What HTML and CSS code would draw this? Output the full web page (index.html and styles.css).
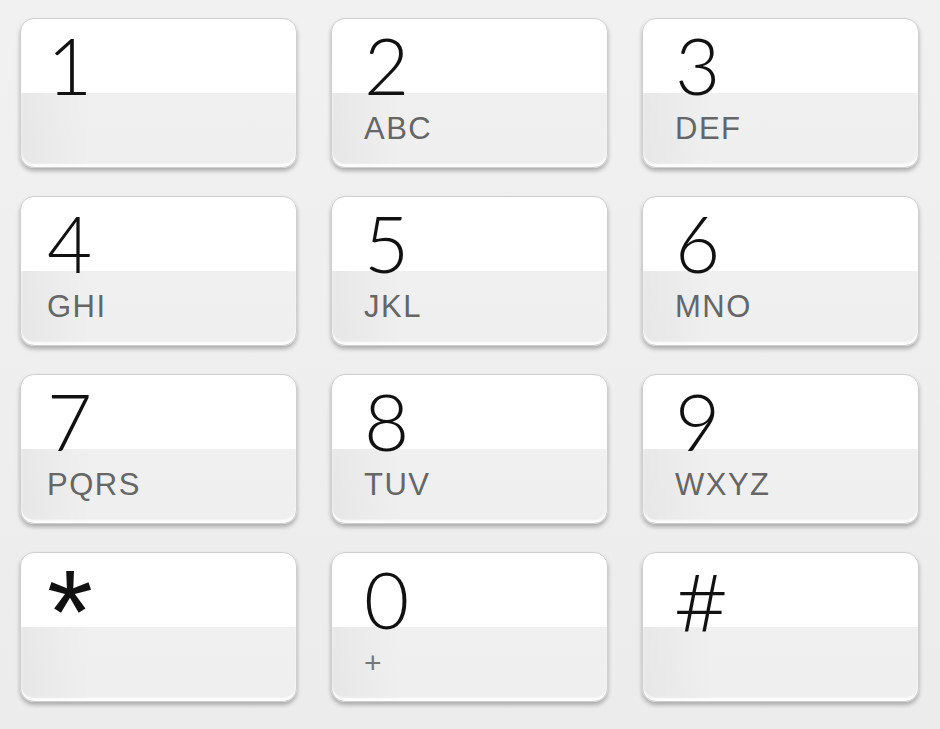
FILE: index.html
```html
<!DOCTYPE html>
<html lang="en">
<head>
  <meta charset="UTF-8" />
  <title>Dialpad</title>
  <link rel="stylesheet" href="styles.css">
</head>
<body>
  <div class="dialpad">
    <div class="key"><span class="digit">1</span></div>
    <div class="key"><span class="digit">2</span><span class="letters">ABC</span></div>
    <div class="key"><span class="digit">3</span><span class="letters">DEF</span></div>

    <div class="key"><span class="digit">4</span><span class="letters">GHI</span></div>
    <div class="key"><span class="digit">5</span><span class="letters">JKL</span></div>
    <div class="key"><span class="digit">6</span><span class="letters">MNO</span></div>

    <div class="key"><span class="digit">7</span><span class="letters">PQRS</span></div>
    <div class="key"><span class="digit">8</span><span class="letters">TUV</span></div>
    <div class="key"><span class="digit">9</span><span class="letters">WXYZ</span></div>

    <div class="key"><span class="digit star">*</span></div>
    <div class="key"><span class="digit">0</span><span class="letters plus">+</span></div>
    <div class="key"><span class="digit hash">#</span></div>
  </div>
</body>
</html>
```

FILE: styles.css
```css
* {
  margin: 0;
  padding: 0;
  box-sizing: border-box;
}
body {
  width: 940px;
  height: 729px;
  background: linear-gradient(#f1f1f1, #ececec);
  font-family: 'Lato', 'Open Sans', sans-serif;
  overflow: hidden;
}
.dialpad {
  display: grid;
  grid-template-columns: repeat(3, 277px);
  grid-auto-rows: 150px;
  column-gap: 34px;
  row-gap: 28px;
  padding: 18px 0 0 20px;
}
.key {
  display: flex;
  flex-direction: column;
  align-items: flex-start;
  padding: 15px 0 0 32px;
  border: 1px solid #cfcfcf;
  border-radius: 14px;
  background:
    linear-gradient(90deg, rgba(0, 0, 0, 0.035), rgba(0, 0, 0, 0) 70px) 0 100% / 100% 50% no-repeat,
    linear-gradient(#ffffff 0, #ffffff 50%, #f0f0f0 50%, #efefef 100%);
  box-shadow: 0 3px 4px rgba(0, 0, 0, 0.28), inset 0 -3px 2px rgba(255, 255, 255, 0.9);
}
.key:nth-child(3n+1) {
  padding-left: 26px;
}
.digit {
  font-size: 78px;
  font-weight: 300;
  line-height: 62px;
  color: #111;
}
.star {
  font-family: 'Liberation Sans', sans-serif;
  font-weight: 400;
  font-size: 118px;
  line-height: 89px;
}
.hash {
  font-family: 'Open Sans', sans-serif;
  font-weight: 300;
  font-size: 80px;
  line-height: 66px;
}
.letters {
  margin-top: 18px;
  font-family: 'Liberation Sans', 'Lato', sans-serif;
  font-size: 31px;
  line-height: 30px;
  color: #666;
  letter-spacing: 1.5px;
}
.plus {
  font-size: 30px;
  color: #777;
}
```
